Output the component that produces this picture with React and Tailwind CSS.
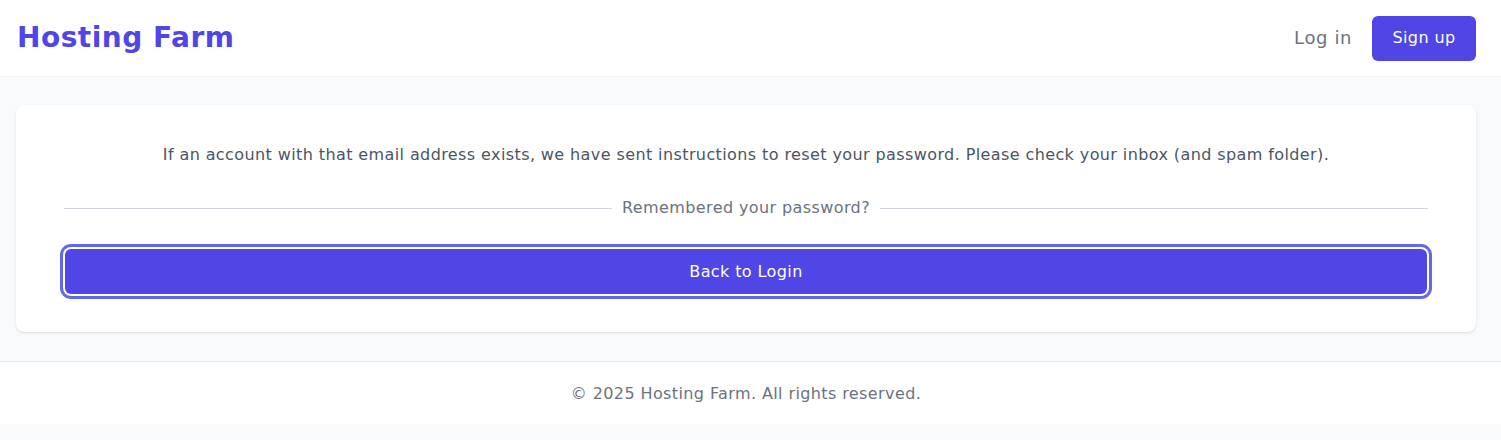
export default function App() {
  return (
    <div className="min-h-screen bg-[#f9fafb] text-base tracking-wide" style={{ fontFamily: '"DejaVu Sans", sans-serif' }}>
      <header className="flex h-[77px] items-center justify-between border-b border-[#f3f4f6] bg-white pl-[17px] pr-[25px]">
        <div className="text-[28px] font-bold tracking-[0.5px] text-[#4f46e5]">Hosting Farm</div>
        <div className="flex items-center gap-5">
          <a className="text-lg tracking-[0.6px] text-[#6b7280]">Log in</a>
          <button className="h-[45px] w-[104px] rounded-md bg-[#4f46e5] text-base text-white">Sign up</button>
        </div>
      </header>
      <main className="pl-4 pr-[25px] pt-7 pb-[29px]">
        <div className="rounded-lg bg-white px-12 pt-[38px] pb-[38px] shadow-sm">
          <p className="text-center leading-6 text-[#4b5563]">
            If an account with that email address exists, we have sent instructions to reset your password. Please check your inbox (and spam folder).
          </p>
          <div className="mt-[29px] flex items-center gap-2.5">
            <div className="h-px flex-1 bg-[#d1d5db]" />
            <span className="leading-6 text-[#6b7280]">Remembered your password?</span>
            <div className="h-px flex-1 bg-[#d1d5db]" />
          </div>
          <div className="mt-[29px] px-px">
            <button className="flex h-[45px] w-full items-center justify-center rounded-md bg-[#4f46e5] text-white ring-[3px] ring-[#6366f1] ring-offset-2">
              Back to Login
            </button>
          </div>
        </div>
      </main>
      <footer className="flex h-[63px] items-center justify-center border-t border-[#e5e7eb] bg-white pl-4 pr-[25px] pt-[2px] text-[#6b7280]">
        © 2025 Hosting Farm. All rights reserved.
      </footer>
    </div>
  );
}
